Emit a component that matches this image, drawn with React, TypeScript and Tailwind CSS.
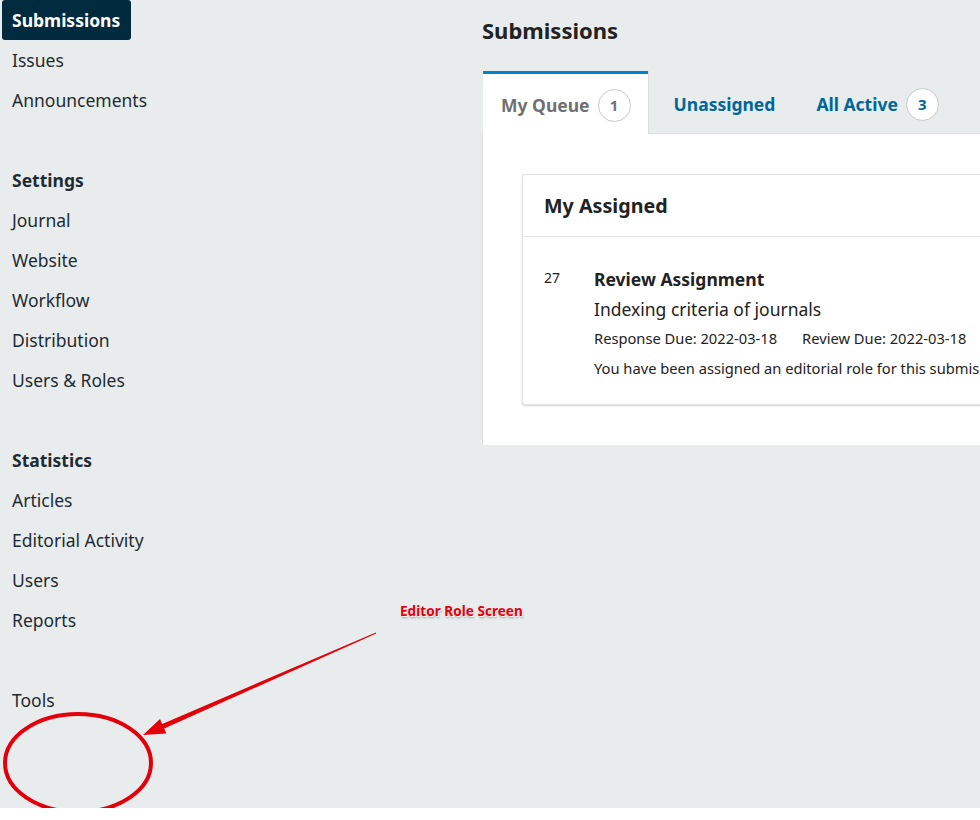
import React from "react";

const NAV: { label: string; kind?: "active" | "head" | "gap" }[] = [
  { label: "Submissions", kind: "active" },
  { label: "Issues" },
  { label: "Announcements" },
  { label: "", kind: "gap" },
  { label: "Settings", kind: "head" },
  { label: "Journal" },
  { label: "Website" },
  { label: "Workflow" },
  { label: "Distribution" },
  { label: "Users & Roles" },
  { label: "", kind: "gap" },
  { label: "Statistics", kind: "head" },
  { label: "Articles" },
  { label: "Editorial Activity" },
  { label: "Users" },
  { label: "Reports" },
  { label: "", kind: "gap" },
  { label: "Tools" },
];

function Badge({ n, blue }: { n: number; blue?: boolean }) {
  return (
    <span
      className={`ml-[8px] inline-flex h-[33px] w-[33px] items-center justify-center rounded-full border border-[#c8c8c8] bg-white text-[15px] font-bold ${
        blue ? "text-[#006798]" : "text-[#707070]"
      }`}
    >
      {n}
    </span>
  );
}

function Annotation() {
  return (
    <div className="pointer-events-none absolute inset-0">
      <div className="absolute left-[400px] top-[601px] text-[13.6px] font-bold text-[#e5000a] [text-shadow:1px_1px_1px_#ffffff,1px_2px_2px_#9a9a9a]">
        Editor Role Screen
      </div>
      <svg className="absolute left-0 top-0" width="980" height="820">
        <polygon
          points="375.8,632.5 162.2,723.9 160,718.9 143,735 166.4,733.5 164.2,728.5 376.2,633.5"
          fill="#e3000b"
        />
        <ellipse cx="78" cy="763" rx="73" ry="49" fill="none" stroke="#e3000b" strokeWidth="4" />
      </svg>
    </div>
  );
}

export default function App() {
  return (
    <div className="relative h-[808px] overflow-hidden bg-[#e9ecec] font-['Noto_Sans',sans-serif] text-[#1e2b33]">
      <div className="flex w-[1200px]">
        {/* sidebar */}
        <nav className="w-[482px] shrink-0 pl-[2px]">
          {NAV.map((item, i) => {
            if (item.kind === "gap") return <div key={i} className="h-[40px]" />;
            if (item.kind === "active")
              return (
                <div key={i} className="flex h-[40px] w-[129px] items-center rounded-[3px] bg-[#002b3e] px-[10px] text-[17.5px] font-bold text-white">
                  {item.label}
                </div>
              );
            return (
              <div
                key={i}
                className={`flex h-[40px] items-center px-[10px] text-[17.5px] ${item.kind === "head" ? "font-bold" : ""}`}
              >
                {item.label}
              </div>
            );
          })}
        </nav>

        {/* main */}
        <main className="min-w-0 flex-1">
          <h1 className="flex h-[62px] items-center pb-[1px] text-[22px] font-bold text-[#222]">Submissions</h1>

          <div className="mt-[9px] flex">
            <div className="ml-[1px] flex h-[63px] items-center border-t-[3px] border-t-[#0083c9] bg-white pl-[18px] pr-[17px] pt-[3px] text-[17.5px] font-bold text-[#707070]">
              My Queue
              <Badge n={1} />
            </div>
            <div className="flex flex-1 items-center border-b border-l border-[#dddddd] pt-[4px] text-[17.5px] font-bold text-[#006798]">
              <span className="pl-[25px] pr-[41px]">Unassigned</span>
              <span>All Active</span>
              <Badge n={3} blue />
            </div>
          </div>

          <div className="h-[311px] border-l border-[#dddddd] bg-white pl-[39px] pt-[40px]">
            <div className="h-[231px] rounded-[3px] border border-[#e2e2e2] border-r-0 bg-white shadow-[0_1px_2px_rgba(0,0,0,0.18)]">
              <div className="flex h-[62px] items-center border-b border-[#e5e5e5] px-[21px] text-[19.7px] font-bold text-[#222]">
                My Assigned
              </div>
              <div className="flex pl-[21px] pt-[29px] text-[#222]">
                <div className="w-[50px] shrink-0 pt-[1px] text-[14px]">27</div>
                <div className="min-w-0 flex-1 whitespace-nowrap">
                  <div className="text-[17.5px] font-bold leading-[26px]">Review Assignment</div>
                  <div className="mt-[3px] text-[17.5px] leading-[28px]">Indexing criteria of journals</div>
                  <div className="mt-[2px] flex gap-[25px] text-[14.7px] leading-[26px]">
                    <span>Response Due: 2022-03-18</span>
                    <span>Review Due: 2022-03-18</span>
                  </div>
                  <div className="mt-[4px] text-[14.7px] leading-[26px]">
                    You have been assigned an editorial role for this submission.
                  </div>
                </div>
              </div>
            </div>
          </div>
        </main>
      </div>
      <Annotation />
    </div>
  );
}
